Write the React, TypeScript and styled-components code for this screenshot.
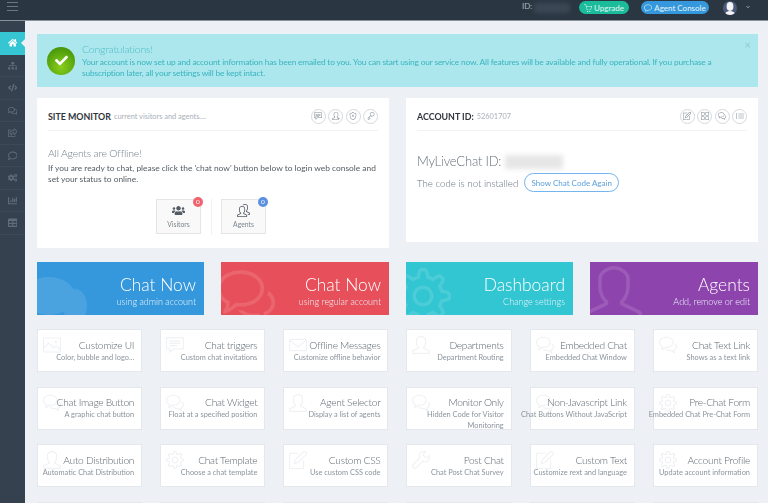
import React from "react";
import styled, { createGlobalStyle } from "styled-components";
import { FaHome, FaSitemap, FaCode, FaRegComments, FaRegShareSquare, FaRegComment, FaCogs, FaChartBar, FaTable, FaUsers, FaCheck, FaChevronDown } from "react-icons/fa";
import { SlPicture, SlSpeech, SlEnvolope, SlBubbles, SlUser, SlSettings, SlNote, SlWrench, SlBasket, SlBubble, SlPeople, SlGrid, SlList, SlKey, SlShield, SlUserFollow } from "react-icons/sl";

const font = `Lato, "Open Sans", sans-serif`;

const Global = createGlobalStyle`
  html, body { margin: 0; padding: 0; height: 503px; overflow: hidden; background: #edf0f5; }
  * { box-sizing: border-box; }
  #root { height: 503px; font-family: ${font}; }
`;

const Page = styled.div`
  height: 503px;
  overflow: hidden;
  filter: blur(0.3px);
`;

const TopBar = styled.header`
  height: 21px;
  background: #2b3643;
  border-bottom: 1px solid #8a929c;
  display: flex;
  align-items: flex-start;
  padding: 1px 18px 0 7px;
  color: #aeb6bf;
`;

const Burger = styled.div`
  width: 11px;
  height: 9px;
  margin-top: 1px;
  border-top: 1px solid #6d7783;
  border-bottom: 1px solid #6d7783;
  position: relative;
  &::after {
    content: "";
    position: absolute;
    left: 0;
    right: 0;
    top: 3px;
    height: 1px;
    background: #6d7783;
  }
`;

const TopId = styled.div`
  margin-left: auto;
  font-size: 8px;
  line-height: 11px;
  display: flex;
  align-items: flex-start;
  width: 57px;
  gap: 2px;
`;

const TopIdMask = styled.span`
  width: 36px;
  height: 10px;
  margin-top: 2px;
  background: #3c4755;
  filter: blur(2px);
`;

const PillButton = styled.button<{ $bg: string; $w: number }>`
  width: ${(p) => p.$w}px;
  height: 13px;
  border: 0;
  border-radius: 7px;
  background: ${(p) => p.$bg};
  color: #e8f6f6;
  font-family: ${font};
  font-size: 8px;
  padding: 0;
  display: flex;
  align-items: center;
  justify-content: center;
  gap: 2px;
  margin-right: 12px;
  white-space: nowrap;
`;

const Avatar = styled.div`
  width: 14px;
  height: 14px;
  margin: 0 9px 0 2px;
  border-radius: 50%;
  background: #4c5a7a;
  overflow: hidden;
`;

const AvatarArt = styled.svg`
  display: block;
  width: 14px;
  height: 14px;
`;

const Caret = styled.div`
  font-size: 4px;
  margin-top: 4px;
  color: #a8b0b9;
`;

const Layout = styled.div`
  display: flex;
  height: 482px;
`;

const Sidebar = styled.nav`
  width: 25px;
  flex: none;
  background: #364150;
  padding-top: 11px;
`;

const SideItem = styled.div<{ $active?: boolean }>`
  height: 22.5px;
  display: flex;
  align-items: center;
  justify-content: center;
  font-size: 9.5px;
  position: relative;
  color: ${(p) => (p.$active ? "#ffffff" : "#5f6c7c")};
  background: ${(p) => (p.$active ? "#36c6d3" : "transparent")};
  border-bottom: 1px solid ${(p) => (p.$active ? "#36c6d3" : "#3d4957")};
  ${(p) =>
    p.$active &&
    `&::after {
      content: "";
      position: absolute;
      right: 0;
      top: 6.5px;
      border: 4.5px solid transparent;
      border-right-color: #edf0f5;
      border-left-width: 0;
    }`}
`;

const Main = styled.main`
  flex: 1;
  min-width: 0;
  padding: 13px 10px 0 12px;
  overflow: hidden;
`;

const Alert = styled.section`
  height: 53px;
  background: #abe7ed;
  display: flex;
  padding: 0 10px;
  align-items: center;
  gap: 7px;
  position: relative;
  margin-bottom: 11px;
`;

const CheckBall = styled.div`
  width: 28px;
  height: 28px;
  flex: none;
  border-radius: 50%;
  background: radial-gradient(circle at 50% 70%, #8bcf1c 0%, #5aa80f 55%, #3b8706 100%);
  color: #fff;
  font-size: 13px;
  display: flex;
  align-items: center;
  justify-content: center;
`;

const AlertBody = styled.div`
  color: #3bb4bf;
  font-size: 8.4px;
  letter-spacing: -0.18px;
  line-height: 10.7px;
  padding-right: 30px;
`;

const AlertTitle = styled.div`
  font-size: 10.5px;
  letter-spacing: -0.2px;
  font-weight: 300;
  line-height: 14px;
  margin-bottom: 1px;
  color: #4fbcc5;
`;

const CloseX = styled.span`
  position: absolute;
  top: 5px;
  right: 7px;
  font-size: 11px;
  line-height: 12px;
  color: #8ccdd3;
`;

const Panels = styled.div`
  display: grid;
  grid-template-columns: 1fr 1fr;
  gap: 17px;
  align-items: start;
  margin-bottom: 14px;
`;

const Panel = styled.section<{ $h: number }>`
  height: ${(p) => p.$h}px;
  background: #fff;
  padding: 0 11px;
`;

const PanelHead = styled.div`
  height: 33px;
  display: flex;
  align-items: center;
  border-bottom: 1px solid #f0f2f5;
  padding-top: 4px;
`;

const PanelTitle = styled.h2`
  margin: 0;
  font-size: 8.85px;
  font-weight: 700;
  color: #2f353b;
  white-space: nowrap;
`;

const PanelSub = styled.span`
  font-size: 7.4px;
  color: #a9b1b9;
  margin-left: 3px;
  white-space: nowrap;
`;

const RoundIcons = styled.div`
  margin-left: auto;
  display: flex;
  gap: 2.5px;
`;

const RoundIcon = styled.span`
  width: 15px;
  height: 15px;
  border: 1px solid #d5d9dd;
  border-radius: 50%;
  display: flex;
  align-items: center;
  justify-content: center;
  font-size: 8px;
  color: #7d8790;
`;

const OfflineTitle = styled.h3`
  margin: 15px 0 0;
  font-size: 10.5px;
  letter-spacing: -0.25px;
  line-height: 14px;
  font-weight: 300;
  color: #75808a;
`;

const OfflineText = styled.p`
  margin: 3px 0 0;
  font-size: 8.4px;
  line-height: 10.7px;
  color: #555c63;
`;

const Counters = styled.div`
  display: flex;
  justify-content: center;
  margin: 15px 0 0;
  padding-right: 4px;
`;

const Counter = styled.div`
  width: 45px;
  height: 34.5px;
  background: #f9f9f9;
  border: 1px solid #e3e5e8;
  display: flex;
  flex-direction: column;
  align-items: center;
  justify-content: center;
  font-size: 6.8px;
  line-height: 9px;
  color: #7d858d;
  position: relative;
`;

const CounterIcon = styled.span`
  font-size: 13px;
  line-height: 13px;
  color: #555c66;
  margin-bottom: 1px;
`;

const Badge = styled.span<{ $bg: string }>`
  position: absolute;
  top: -3px;
  right: -3px;
  width: 10px;
  height: 10px;
  border-radius: 50%;
  background: ${(p) => p.$bg};
  color: #fff;
  font-size: 6.5px;
  line-height: 10px;
  text-align: center;
`;

const CounterDivider = styled.div`
  width: 1px;
  height: 36px;
  margin: 0 9px 0 10px;
  background: #f0f1f3;
`;

const MyChatLine = styled.div`
  margin-top: 21px;
  display: flex;
  align-items: center;
  font-size: 13px;
  letter-spacing: -0.2px;
  line-height: 19px;
  font-weight: 300;
  color: #67727c;
`;

const IdMask = styled.span`
  width: 58px;
  height: 14px;
  margin-left: 4px;
  background: #e6e6e6;
  filter: blur(2.5px);
`;

const InstallLine = styled.div`
  margin-top: 2px;
  display: flex;
  align-items: center;
  gap: 6px;
  font-size: 9.7px;
  font-weight: 300;
  color: #67727c;
  white-space: nowrap;
`;

const CodeButton = styled.button`
  width: 95px;
  height: 19px;
  border: 1px solid #72b5ef;
  border-radius: 10px;
  background: #fff;
  color: #5a9fdc;
  font-family: ${font};
  font-size: 8px;
  padding: 0;
  white-space: nowrap;
`;

const BigRow = styled.div`
  display: grid;
  grid-template-columns: 167px 168px 167px 168px;
  gap: 17px;
  margin-bottom: 14px;
`;

const BigTile = styled.a<{ $bg: string }>`
  height: 53px;
  background: ${(p) => p.$bg};
  color: #fff;
  position: relative;
  overflow: hidden;
  display: flex;
  flex-direction: column;
  align-items: flex-end;
  padding: 13px 8px 0 0;
`;

const BigGlyph = styled.span<{ $size: number; $x: number; $y: number; $alpha: number }>`
  position: absolute;
  left: ${(p) => p.$x}px;
  top: ${(p) => p.$y}px;
  font-size: ${(p) => p.$size}px;
  color: #fff;
  opacity: ${(p) => p.$alpha};
  & > svg {
    display: block;
  }
`;

const BigTitle = styled.div`
  font-size: 17.4px;
  line-height: 20px;
  font-weight: 300;
  position: relative;
`;

const BigSub = styled.div`
  font-size: 9px;
  line-height: 11px;
  font-weight: 300;
  margin-top: 1px;
  position: relative;
  color: #eaf4fb;
`;

const SmallGrid = styled.div`
  display: grid;
  grid-template-columns: repeat(6, minmax(0, 1fr));
  column-gap: 18px;
  row-gap: 14.5px;
  grid-auto-rows: 43px;
`;

const SmallTile = styled.a`
  background: #fff;
  border: 1px solid #e4e7ec;
  position: relative;
  display: flex;
  flex-direction: column;
  align-items: flex-end;
  padding: 7.5px 7px 0 0;
  text-align: right;
`;

const SmallGlyph = styled.span`
  position: absolute;
  left: 5px;
  top: 6px;
  font-size: 18px;
  color: #f0f1f4;
  & > svg {
    display: block;
  }
`;

const SmallTitle = styled.div`
  font-size: 10.2px;
  letter-spacing: -0.3px;
  line-height: 14px;
  font-weight: 300;
  color: #5f6972;
  white-space: nowrap;
  position: relative;
`;

const SmallDesc = styled.div<{ $wrap?: boolean }>`
  font-size: 7.4px;
  line-height: 10.8px;
  font-weight: 400;
  color: #8b949c;
  margin-top: 1px;
  white-space: ${(p) => (p.$wrap ? "normal" : "nowrap")};
  position: relative;
  flex: none;
`;

const FilledBubbles = () => (
  <svg width="60" height="48" viewBox="0 0 60 48" fill="currentColor">
    <ellipse cx="12" cy="20" rx="26" ry="19" />
    <ellipse cx="38" cy="30" rx="12" ry="17" />
  </svg>
);

const sideItems = [FaHome, FaSitemap, FaCode, FaRegComments, FaRegShareSquare, FaRegComment, FaCogs, FaChartBar, FaTable];

const bigTiles = [
  { bg: "#3598dc", title: "Chat Now", sub: "using admin account", glyph: <FilledBubbles />, size: 48, x: 0, y: 14, alpha: 0.1 },
  { bg: "#e7505a", title: "Chat Now", sub: "using regular account", glyph: <SlBubbles />, size: 58, x: -4, y: 6, alpha: 0.12 },
  { bg: "#32c5d2", title: "Dashboard", sub: "Change settings", glyph: <SlSettings />, size: 56, x: -11, y: 6, alpha: 0.12 },
  { bg: "#8e44ad", title: "Agents", sub: "Add, remove or edit", glyph: <SlUser />, size: 56, x: -4, y: 4, alpha: 0.12 },
];

const smallTiles: { icon: React.ReactNode; title?: string; desc?: string; wrap?: boolean }[] = [
  { icon: <SlPicture />, title: "Customize UI", desc: "Color, bubble and logo..." },
  { icon: <SlSpeech />, title: "Chat triggers", desc: "Custom chat invitations" },
  { icon: <SlEnvolope />, title: "Offline Messages", desc: "Customize offline behavior" },
  { icon: <SlUser />, title: "Departments", desc: "Department Routing" },
  { icon: <SlBubbles />, title: "Embedded Chat", desc: "Embedded Chat Window" },
  { icon: <SlBubbles />, title: "Chat Text Link", desc: "Shows as a text link" },
  { icon: <SlBubbles />, title: "Chat Image Button", desc: "A graphic chat button" },
  { icon: <SlBubbles />, title: "Chat Widget", desc: "Float at a specified position" },
  { icon: <SlUser />, title: "Agent Selector", desc: "Display a list of agents" },
  { icon: <SlBubbles />, title: "Monitor Only", desc: "Hidden Code for Visitor Monitoring", wrap: true },
  { icon: <SlBubbles />, title: "Non-Javascript Link", desc: "Chat Buttons Without JavaScript" },
  { icon: <SlSettings />, title: "Pre-Chat Form", desc: "Embedded Chat Pre-Chat Form" },
  { icon: <SlUser />, title: "Auto Distribution", desc: "Automatic Chat Distribution" },
  { icon: <SlSettings />, title: "Chat Template", desc: "Choose a chat template" },
  { icon: <SlNote />, title: "Custom CSS", desc: "Use custom CSS code" },
  { icon: <SlWrench />, title: "Post Chat", desc: "Chat Post Chat Survey" },
  { icon: <SlNote />, title: "Custom Text", desc: "Customize rext and language" },
  { icon: <SlSettings />, title: "Account Profile", desc: "Update account information" },
  { icon: null },
  { icon: null },
  { icon: null },
  { icon: null },
  { icon: null },
  { icon: null },
];

export default function App() {
  return (
    <Page>
      <Global />
      <TopBar>
        <Burger />
        <TopId>
          ID:
          <TopIdMask />
        </TopId>
        <PillButton $bg="#1bbc9b" $w={50}>
          <SlBasket /> Upgrade
        </PillButton>
        <PillButton $bg="#3598dc" $w={68}>
          <SlBubble /> Agent Console
        </PillButton>
        <Avatar>
          <AvatarArt viewBox="0 0 14 14">
            <ellipse cx="7" cy="5.5" rx="3.4" ry="4.4" fill="#f4f4f6" />
            <path d="M1.5 14c.5-3 3-4 5.5-4s5 1 5.5 4z" fill="#f4f4f6" />
          </AvatarArt>
        </Avatar>
        <Caret>
          <FaChevronDown />
        </Caret>
      </TopBar>
      <Layout>
        <Sidebar>
          {sideItems.map((Icon, i) => (
            <SideItem key={i} $active={i === 0}>
              <Icon />
            </SideItem>
          ))}
        </Sidebar>
        <Main>
          <Alert>
            <CheckBall>
              <FaCheck />
            </CheckBall>
            <AlertBody>
              <AlertTitle>Congratulations!</AlertTitle>
              Your account is now set up and account information has been emailed to you. You can start using our service now. All features will be available and fully operational. If you purchase a subscription later, all your settings will be kept intact.
            </AlertBody>
            <CloseX>×</CloseX>
          </Alert>
          <Panels>
            <Panel $h={150}>
              <PanelHead>
                <PanelTitle>SITE MONITOR</PanelTitle>
                <PanelSub>current visitors and agents....</PanelSub>
                <RoundIcons>
                  <RoundIcon><SlSpeech /></RoundIcon>
                  <RoundIcon><SlUserFollow /></RoundIcon>
                  <RoundIcon><SlShield /></RoundIcon>
                  <RoundIcon><SlKey /></RoundIcon>
                </RoundIcons>
              </PanelHead>
              <OfflineTitle>All Agents are Offline!</OfflineTitle>
              <OfflineText>
                If you are ready to chat, please click the 'chat now' button below to login web console and set your status to online.
              </OfflineText>
              <Counters>
                <Counter>
                  <CounterIcon><FaUsers /></CounterIcon>
                  Visitors
                  <Badge $bg="#f0626e">0</Badge>
                </Counter>
                <CounterDivider />
                <Counter>
                  <CounterIcon><SlPeople /></CounterIcon>
                  Agents
                  <Badge $bg="#5b8fe0">0</Badge>
                </Counter>
              </Counters>
            </Panel>
            <Panel $h={144}>
              <PanelHead>
                <PanelTitle>ACCOUNT ID:</PanelTitle>
                <PanelSub>52601707</PanelSub>
                <RoundIcons>
                  <RoundIcon><SlNote /></RoundIcon>
                  <RoundIcon><SlGrid /></RoundIcon>
                  <RoundIcon><SlBubbles /></RoundIcon>
                  <RoundIcon><SlList /></RoundIcon>
                </RoundIcons>
              </PanelHead>
              <MyChatLine>
                MyLiveChat ID:
                <IdMask />
              </MyChatLine>
              <InstallLine>
                The code is not installed
                <CodeButton>Show Chat Code Again</CodeButton>
              </InstallLine>
            </Panel>
          </Panels>
          <BigRow>
            {bigTiles.map((t) => (
              <BigTile key={t.bg} $bg={t.bg}>
                <BigGlyph $size={t.size} $x={t.x} $y={t.y} $alpha={t.alpha}>{t.glyph}</BigGlyph>
                <BigTitle>{t.title}</BigTitle>
                <BigSub>{t.sub}</BigSub>
              </BigTile>
            ))}
          </BigRow>
          <SmallGrid>
            {smallTiles.map((t, i) => (
              <SmallTile key={i}>
                {t.icon && <SmallGlyph>{t.icon}</SmallGlyph>}
                {t.title && <SmallTitle>{t.title}</SmallTitle>}
                {t.desc && <SmallDesc $wrap={t.wrap}>{t.desc}</SmallDesc>}
              </SmallTile>
            ))}
          </SmallGrid>
        </Main>
      </Layout>
    </Page>
  );
}
